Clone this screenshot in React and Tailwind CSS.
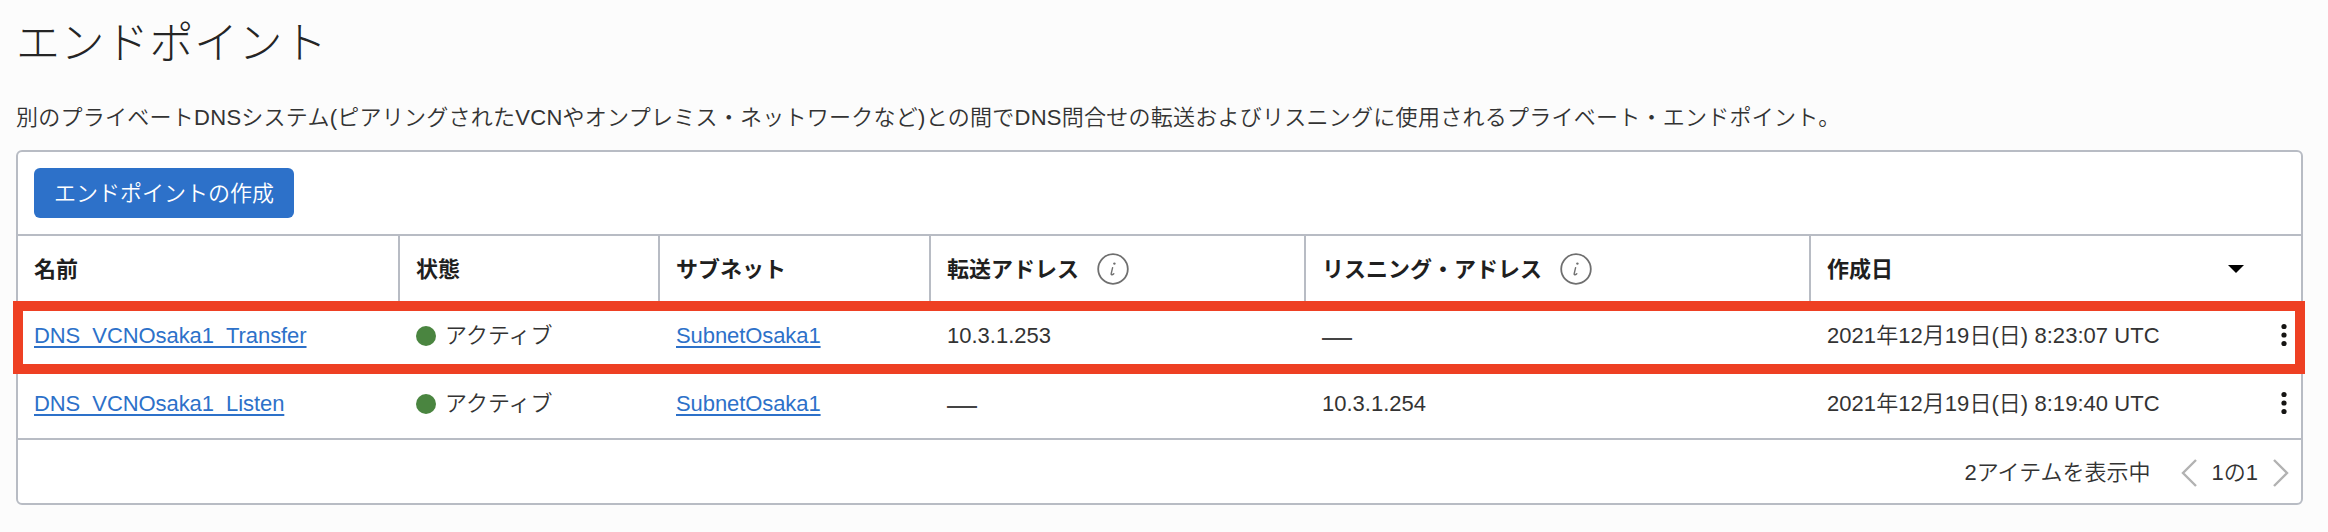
const FONT = "font-['Liberation_Sans','Noto_Sans_CJK_JP',sans-serif]";
const GRID = "grid grid-cols-[382px_260px_271px_375px_505px_1fr]";
const LINK = "text-[#2d71c9] underline underline-offset-[3px] decoration-2 tracking-[-0.08px]";

function InfoIcon() {
  return (
    <svg viewBox="0 0 32 32" className="w-8 h-8 ml-[18px] shrink-0" fill="none">
      <circle cx="16" cy="16" r="14.8" stroke="#6f6f6f" strokeWidth="1.8" />
      <circle cx="17.4" cy="10.6" r="1.2" fill="#6f6f6f" />
      <path d="M15.6 14.6 L14.2 20.6 C13.9 22 15.2 22.3 16.8 20.8" stroke="#6f6f6f" strokeWidth="1.4" strokeLinecap="round" />
    </svg>
  );
}

function Kebab() {
  return (
    <svg viewBox="0 0 6 24" className="w-[6px] h-6 mr-[14px]" fill="#161513">
      <circle cx="3" cy="3.5" r="2.6" />
      <circle cx="3" cy="12" r="2.6" />
      <circle cx="3" cy="20.5" r="2.6" />
    </svg>
  );
}

function Chevron({ dir }) {
  return (
    <svg viewBox="0 0 16 28" className="w-4 h-7" fill="none" stroke="#b2b2b2" strokeWidth="2.4">
      <path d={dir === "left" ? "M15 1 L2 14 L15 27" : "M1 1 L14 14 L1 27"} />
    </svg>
  );
}

function HeaderCell({ children, last }) {
  return (
    <div className={"flex items-center pl-4 font-bold text-[#1f1f1f] " + (last ? "justify-between pr-[57px]" : "border-r-2 border-[#b8bcc4]")}>
      {children}
    </div>
  );
}

function Row({ name, forward, listen, created }) {
  return (
    <div className={GRID + " h-[68px] items-center pb-[2px] font-[350] text-[#333333]"}>
      <div className="pl-4"><a className={LINK}>{name}</a></div>
      <div className="pl-4 flex items-center">
        <span className="w-5 h-5 rounded-full bg-[#4a8540] mr-[9px] mt-[2px]" />
        <span>アクティブ</span>
      </div>
      <div className="pl-4"><a className={LINK}>SubnetOsaka1</a></div>
      <div className="pl-4">{forward}</div>
      <div className="pl-4">{listen}</div>
      <div className="pl-4 flex items-center justify-between">
        <span className="tracking-[0.05px]">{created}</span>
        <Kebab />
      </div>
    </div>
  );
}

const Dash = () => <span className="block pt-[3px] text-[30px] leading-none text-[#444444]">—</span>;

export default function App() {
  return (
    <div className={FONT + " relative h-[532px] bg-[#fcfcfc] pl-4 pr-[25px] text-[22px] text-[#333333] overflow-hidden"}>
      <h1 className="h-[84px] pt-[3px] flex items-center text-[44px] font-light tracking-[0.5px] text-[#252525]">エンドポイント</h1>
      <p className="h-[66px] flex items-center font-[350] tracking-[0.26px]">別のプライベートDNSシステム(ピアリングされたVCNやオンプレミス・ネットワークなど)との間でDNS問合せの転送およびリスニングに使用されるプライベート・エンドポイント。</p>
      <div className="relative h-[355px] bg-white border-2 border-[#b8bcc4] rounded-md">
        <div className="h-[84px] px-4 pt-4 border-b-2 border-[#b8bcc4]">
          <button className="h-[50px] w-[260px] rounded-md bg-[#2d71c9] text-white font-[350]">エンドポイントの作成</button>
        </div>
        <div className={GRID + " h-[66px]"}>
          <HeaderCell>名前</HeaderCell>
          <HeaderCell>状態</HeaderCell>
          <HeaderCell>サブネット</HeaderCell>
          <HeaderCell>転送アドレス<InfoIcon /></HeaderCell>
          <HeaderCell>リスニング・アドレス<InfoIcon /></HeaderCell>
          <HeaderCell last>
            <span>作成日</span>
            <svg viewBox="0 0 16 8" className="w-4 h-2"><path d="M0 0 H16 L8 8 Z" fill="#000000" /></svg>
          </HeaderCell>
        </div>
        <Row name="DNS_VCNOsaka1_Transfer" forward="10.3.1.253" listen={<Dash />} created="2021年12月19日(日) 8:23:07 UTC" />
        <Row name="DNS_VCNOsaka1_Listen" forward={<Dash />} listen="10.3.1.254" created="2021年12月19日(日) 8:19:40 UTC" />
        <div className="h-[65px] border-t-2 border-[#b8bcc4] flex items-center justify-end font-[350] pr-3 pt-[2px]">
          <span>2アイテムを表示中</span>
          <span className="ml-[30px]"><Chevron dir="left" /></span>
          <span className="mx-[15px]">1の1</span>
          <Chevron dir="right" />
        </div>
        <div className="absolute left-[-5px] right-[-4px] top-[149px] h-[73px] border-[10px] border-[#ee4023]" />
      </div>
    </div>
  );
}
